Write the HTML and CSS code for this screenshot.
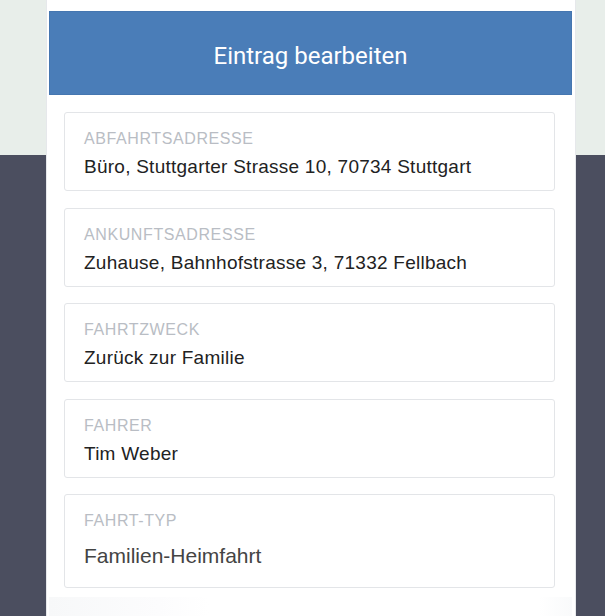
FILE: index.html
```html
<!DOCTYPE html>
<html lang="de">
<head>
<meta charset="utf-8">
<title>Eintrag bearbeiten</title>
<link rel="stylesheet" href="styles.css">
</head>
<body>
<div class="panel">
  <header class="header">
    <h1 class="title">Eintrag bearbeiten</h1>
  </header>
  <div class="form">
    <div class="field">
      <div class="label">Abfahrtsadresse</div>
      <div class="value">Büro, Stuttgarter Strasse 10, 70734 Stuttgart</div>
    </div>
    <div class="field">
      <div class="label">Ankunftsadresse</div>
      <div class="value">Zuhause, Bahnhofstrasse 3, 71332 Fellbach</div>
    </div>
    <div class="field">
      <div class="label">Fahrtzweck</div>
      <div class="value">Zurück zur Familie</div>
    </div>
    <div class="field">
      <div class="label">Fahrer</div>
      <div class="value">Tim Weber</div>
    </div>
    <div class="field field-select">
      <div class="label">Fahrt-Typ</div>
      <div class="value value-select">Familien-Heimfahrt</div>
    </div>
  </div>
  <div class="footer"></div>
</div>
</body>
</html>
```

FILE: styles.css
```css
html, body {
  margin: 0;
  padding: 0;
}

body {
  width: 605px;
  height: 616px;
  overflow: hidden;
  background: linear-gradient(to bottom, #e8eeea 0, #e8eeea 155px, #4b4e5f 155px, #4b4e5f 100%);
  font-family: "Liberation Sans", Arial, sans-serif;
}

.panel {
  margin-left: 46px;
  width: 530px;
  box-sizing: border-box;
  min-height: 616px;
  background: #ffffff;
  border-left: 1px solid #e6e8eb;
  border-right: 1px solid #e6e8eb;
  padding: 11px 3px 0 2px;
}

.header {
  height: 84px;
  box-sizing: border-box;
  background: #4a7db8;
  border: 1px solid #4576b0;
  display: flex;
  align-items: center;
  justify-content: center;
  padding-top: 5px;
}

.title {
  margin: 0;
  font-family: Roboto, "Liberation Sans", sans-serif;
  font-weight: 400;
  font-size: 24px;
  line-height: 28px;
  color: #ffffff;
}

.form {
  padding: 17px 17px 0 15px;
  display: flex;
  flex-direction: column;
  gap: 16.5px;
}

.field {
  border: 1px solid #e3e5e8;
  border-radius: 3px;
  padding: 17px 19px 12px 19px;
  display: flex;
  flex-direction: column;
  gap: 8px;
}

.label {
  font-size: 16px;
  line-height: 18px;
  text-transform: uppercase;
  color: #b9bdc4;
  letter-spacing: 0.6px;
}

.value {
  font-size: 19px;
  line-height: 22px;
  color: #222222;
  letter-spacing: 0.25px;
}

.field-select {
  padding-bottom: 18px;
  gap: 13px;
}

.value-select {
  font-size: 21px;
  line-height: 26px;
  color: #444444;
  letter-spacing: 0;
}

.footer {
  margin-top: 9px;
  height: 30px;
  background: linear-gradient(to right, #f7f8f9 0, #fcfcfd 110px, #ffffff 160px, #ffffff 490px, #f9fafb 100%);
}
```
